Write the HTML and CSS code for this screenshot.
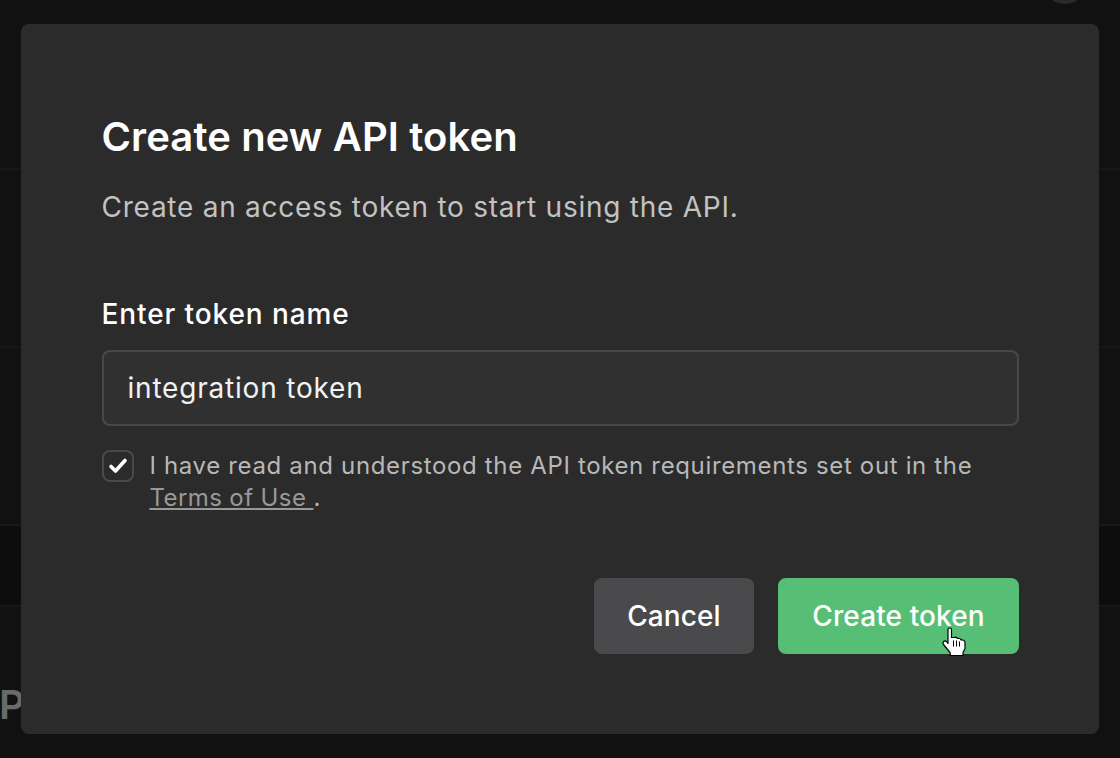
FILE: index.html
```html
<!DOCTYPE html>
<html lang="en">
<head>
<meta charset="utf-8">
<title>Create new API token</title>
<link rel="stylesheet" href="styles.css">
</head>
<body>
<div class="backdrop">
  <div class="avatar"></div>
  <div class="band band-a"></div>
  <div class="band band-b"></div>
  <div class="band band-c"></div>
  <div class="peek">P</div>
</div>
<main class="modal">
  <h1 class="title">Create new API token</h1>
  <p class="subtitle">Create an access token to start using the API.</p>
  <label class="field-label" for="token">Enter token name</label>
  <div class="input" id="token">integration token</div>
  <div class="terms">
    <span class="checkbox">
      <svg width="22" height="18" viewBox="0 0 22 18"><path d="M4 9.5 L8.5 14 L18 3.5" fill="none" stroke="#fff" stroke-width="3.6" stroke-linecap="round" stroke-linejoin="round"/></svg>
    </span>
    <p class="terms-text">I have read and understood the API token requirements set out in the <a class="terms-link">Terms of Use </a>.</p>
  </div>
  <div class="actions">
    <button class="btn btn-cancel">Cancel</button>
    <button class="btn btn-create">Create token</button>
  </div>
  <svg class="cursor" width="24" height="30" viewBox="-0.5 -0.5 24 30"><path d="M5.5 2 C5.5 0 9 0 9 2 L9 10 L12 10 C13 9.5 14.5 10 15 11 C16.5 10.5 18 11 18.5 12.5 C20 12 22.5 13 22.5 15 L22.5 21 L20.5 25 L20.5 28 L8 28 L7.5 25 L1 17 C-0.5 14.5 2 12.5 4 14 L5.5 16 Z" fill="#fff" stroke="#000" stroke-width="1.2" stroke-linejoin="round"/><path d="M11 13 V19 M14 13 V19 M17 14 V19" stroke="#000" stroke-width="1" fill="none"/></svg>
</main>
</body>
</html>
```
FILE: styles.css
```css
* { box-sizing: border-box; }
html, body { margin: 0; height: 100%; }
body {
  width: 1120px;
  height: 758px;
  overflow: hidden;
  position: relative;
  background: #111111;
  font-family: Inter, "Liberation Sans", sans-serif;
  color: #fff;
}
.backdrop { position: absolute; inset: 0; }
.avatar { position: absolute; left: 1043px; top: -40px; width: 44px; height: 44px; border-radius: 50%; background: #2a2a2a; }
.band { position: absolute; left: 0; right: 0; }
.band-a { top: 168px; height: 2px; background: #171717; }
.band-b { top: 346px; height: 2px; background: #171717; }
.band-c { top: 524px; height: 83px; background: #0d0d0d; border-top: 2px solid #171717; border-bottom: 2px solid #171717; }
.peek { position: absolute; left: -1px; top: 681px; font-size: 40px; line-height: 48px; font-weight: 600; color: #6a6a6a; }
.modal {
  position: absolute;
  left: 21px;
  top: 24px;
  width: 1078px;
  height: 710px;
  background: #2b2b2b;
  border-radius: 8px;
  padding: 89px 80px 0 80.5px;
  display: flex;
  flex-direction: column;
}
.title { margin: 0; font-size: 40px; line-height: 48px; font-weight: 600; letter-spacing: 0.1px; }
.subtitle { margin: 28px 0 0; font-size: 28px; line-height: 36px; color: #c2c2c2; letter-spacing: 0.75px; }
.field-label { margin-top: 71px; font-size: 28px; line-height: 36px; font-weight: 450; letter-spacing: 0.9px; }
.input {
  margin-top: 18px;
  height: 76px;
  background: #303030;
  border: 2px solid #484848;
  border-radius: 8px;
  padding: 0 24px;
  display: flex;
  align-items: center;
  font-size: 28px;
  letter-spacing: 0.8px;
  color: #f2f2f2;
}
.terms { margin-top: 24px; display: flex; gap: 16px; }
.checkbox { width: 32px; height: 32px; border: 2px solid #4a4a4a; border-radius: 8px; display: flex; align-items: center; justify-content: center; flex: none; }
.terms-text { margin: 0; font-size: 24px; line-height: 32px; color: #b8b8b8; letter-spacing: 0.65px; }
.terms-link { color: #999; text-decoration: underline; letter-spacing: 0.4px; }
.actions { margin-top: 64px; display: flex; justify-content: flex-end; gap: 24px; }
.btn { height: 76px; border: 0; border-radius: 8px; color: #fff; font: 450 28px Inter, "Liberation Sans", sans-serif; letter-spacing: 0.1px; }
.btn-cancel { width: 160px; background: #4a4a4c; }
.btn-create { width: 241px; background: #57bf75; }
.cursor { position: absolute; left: 921px; top: 603px; }
```
